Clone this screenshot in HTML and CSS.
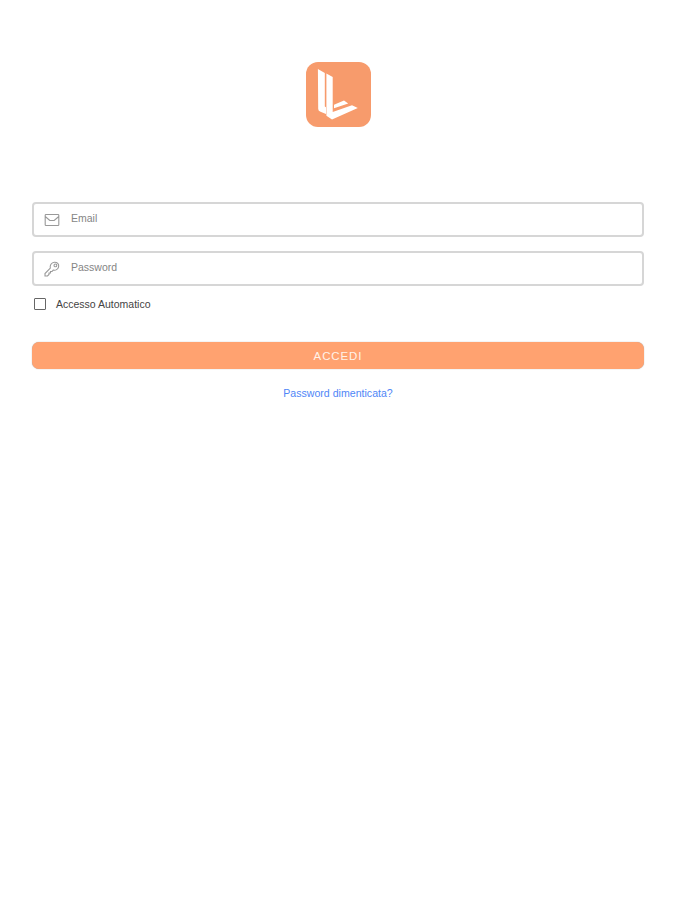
FILE: index.html
```html
<!DOCTYPE html>
<html lang="it">
<head>
    <meta charset="UTF-8">
    <meta name="viewport" content="width=device-width, initial-scale=1.0">
    <title>Accedi</title>
    <link rel="stylesheet" href="styles.css">
</head>
<body>
    <form class="login">
        <svg class="logo" viewBox="0 0 65 65">
            <rect width="65" height="65" rx="12" fill="#f79b6c"/>
            <path fill="#fff" d="M11.9 6.9L18.8 11V44.5L20 45.3V52L14.5 49.8Q12.3 49 12.2 47ZM20.4 11.6L26.7 15V50L46 43.2L51.8 46L26 57.4L20.4 53.7ZM28 46.2V42.8L38 38.4L42.2 41.6Z"/>
        </svg>

        <div class="field">
            <svg class="icon" viewBox="0 0 16 16">
                <path d="M3.3 2.5H2Q1.2 2.5 1.2 3.3V12.7Q1.2 13.5 2 13.5H14Q14.8 13.5 14.8 12.7V3.3Q14.8 2.5 14 2.5H12.7M1.2 4.5L5.8 8.5H10.2L14.8 4.5M3.3 2.5H12.7"/>
            </svg>
            <input type="text" placeholder="Email" autocomplete="off">
        </div>

        <div class="field">
            <svg class="icon" viewBox="0 0 16 16">
                <path d="M6.3 7.2C5.6 4.5 7.4 1.4 10.3 1.2C13.2 1 15.2 3.2 14.6 5.8C14 8.4 11.6 9.7 9.2 9.1L8 10.5H6.5V12H5V13.5L3.5 15H1V12.5Z"/>
                <circle cx="11.4" cy="4.4" r="1.4"/>
            </svg>
            <input type="password" placeholder="Password" autocomplete="off">
        </div>

        <label class="remember">
            <input type="checkbox">
            <span>Accesso Automatico</span>
        </label>

        <button type="button">ACCEDI</button>
        <a class="forgot" href="#">Password dimenticata?</a>
    </form>
</body>
</html>
```

FILE: styles.css
```css
body {
    margin: 0;
    font-family: "Liberation Sans", Arial, sans-serif;
    background-color: #fff;
}
.login {
    display: flex;
    flex-direction: column;
    padding: 62px 31px 0 32px;
}
.logo {
    width: 65px;
    height: 65px;
    align-self: center;
    margin-bottom: 75px;
}
.field {
    display: flex;
    align-items: center;
    box-sizing: border-box;
    height: 35px;
    margin-bottom: 14px;
    padding: 0 10px;
    border: 2px solid #d6d6d6;
    border-radius: 4px;
}
.icon {
    width: 16px;
    height: 16px;
    margin: 0 11px 0 0;
    fill: none;
    stroke: #999;
    stroke-width: 1.1;
}
.field input {
    flex: 1;
    padding: 0 0 4px;
    border: none;
    outline: none;
    background: none;
    font-family: inherit;
    font-size: 10.5px;
}
.field input::placeholder {
    color: #858585;
}
.remember {
    display: flex;
    align-items: center;
    height: 12px;
    margin: -2px 0 32px 2px;
    font-size: 10.5px;
    color: #444;
}
.remember input {
    appearance: none;
    box-sizing: border-box;
    width: 12px;
    height: 12px;
    margin: 0 10px 0 0;
    border: 1px solid #666;
    border-radius: 1px;
}
button {
    height: 27px;
    padding: 0;
    border: none;
    border-radius: 7px;
    background-color: #ffa270;
    box-shadow: 0 0 1px rgba(80, 80, 80, 0.6);
    color: #fff2e8;
    font-family: inherit;
    font-size: 11.5px;
    letter-spacing: 0.9px;
}
.forgot {
    align-self: center;
    margin-top: 18px;
    font-size: 10.6px;
    color: #4f86f7;
    text-decoration: none;
}
```
